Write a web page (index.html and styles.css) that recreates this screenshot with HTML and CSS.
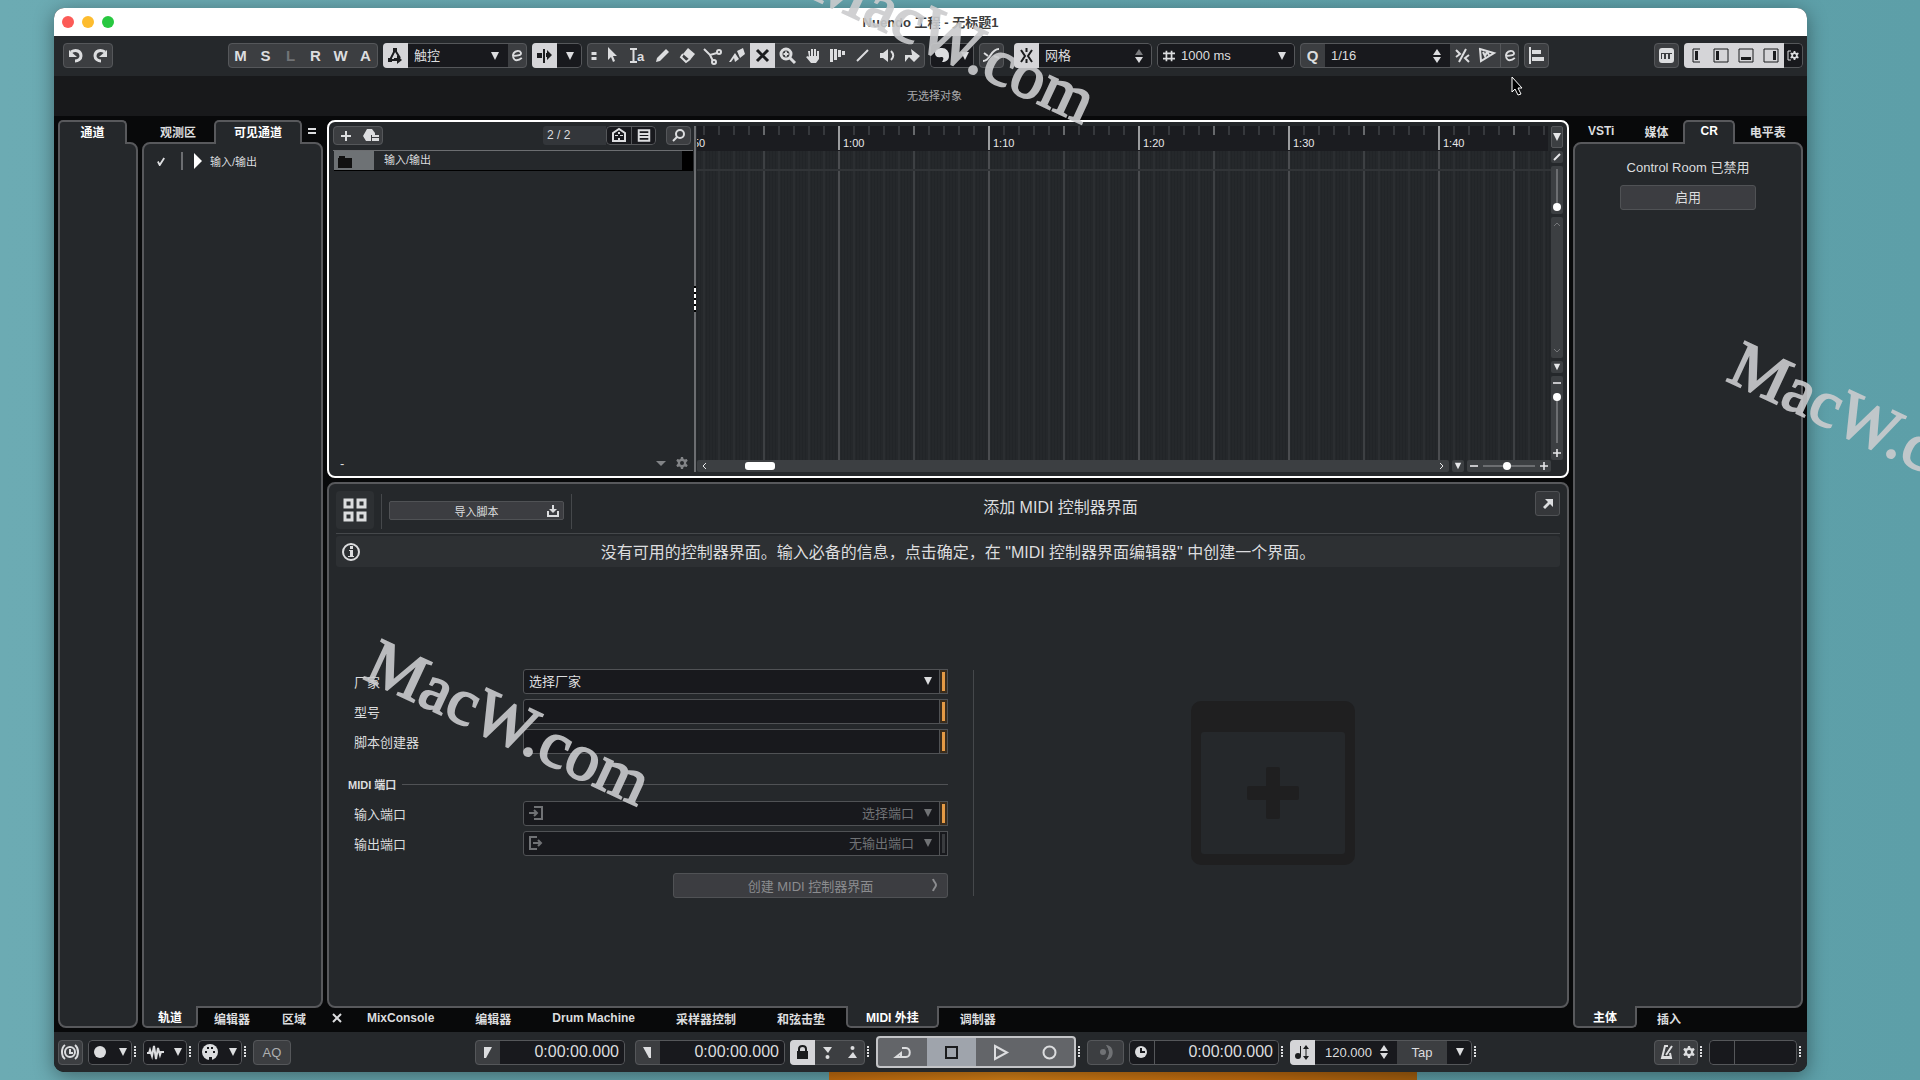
FILE: index.html
```html
<!DOCTYPE html>
<html lang="zh-CN">
<head>
    <meta charset="UTF-8">
    <meta name="viewport" content="width=device-width, initial-scale=1.0">
    <title>Nuendo 工程 - 无标题1</title>
    <link rel="stylesheet" href="styles.css">
</head>
<body>

<!-- Shared icons -->
<svg class="sprite" aria-hidden="true">
    <symbol id="caret" viewBox="0 0 10 10"><path d="M1 1h8L5 9z"/></symbol>
    <symbol id="spin" viewBox="0 0 10 16"><path d="M1 7l4-6 4 6z"/><path d="M1 9h8l-4 6z"/></symbol>
    <symbol id="dots" viewBox="0 0 4 12"><path d="M1 0h2v2H1zM1 3h2v2H1zM1 6h2v2H1zM1 9h2v2H1z"/></symbol>
    <symbol id="gear" viewBox="0 0 12 12"><path fill-rule="evenodd" d="M5 0h2l.5 2 1.200.6 2-.7 1 1.800-1.500 1.500v1.600l1.500 1.500-1 1.800-2-.7-1.200.6L7 12H5l-.5-2-1.200-.6-2 .7-1-1.800 1.500-1.500V5.200L.3 3.700l1-1.800 2 .7L4.500 2zM6 4a2 2 0 100 4 2 2 0 000-4z"/></symbol>
    <symbol id="plus" viewBox="0 0 10 10"><path d="M4 0h2v4h4v2H6v4H4V6H0V4h4z"/></symbol>
    <symbol id="letter-e" viewBox="0 0 20 25"><path class="thin" d="M5 13c6 0 9.500-1 8.500-3.500S8 7 6 10s0 7.500 3 7.500c2 0 4-1 5.500-2.500"/></symbol>
</svg>

<div class="window">
    <header class="titlebar">
        <span class="light red"></span>
        <span class="light yellow"></span>
        <span class="light green"></span>
        <h1>Nuendo 工程 - 无标题1</h1>
    </header>

    <!-- Toolbar -->
    <div class="toolbar">
        <div class="group">
            <button aria-label="撤消"><svg viewBox="0 0 25 25"><path class="line" d="M8 9c5-3 10-1 10 4 0 3-3 5-6 5"/><path d="M6 7v7h8z"/></svg></button>
            <button aria-label="重做"><svg viewBox="0 0 25 25"><path class="line" d="M17 9c-5-3-10-1-10 4 0 3 3 5 6 5"/><path d="M19 7v7h-8z"/></svg></button>
        </div>

        <div class="group states">
            <button>M</button>
            <button>S</button>
            <button class="dim">L</button>
            <button>R</button>
            <button>W</button>
            <button>A</button>
        </div>

        <div class="group">
            <button class="on" aria-label="自动化"><svg viewBox="0 0 25 25"><path class="thin" d="M7 17l5-10 5 8M7 17h4"/><path d="M10 5h4v4h-4zM5 15h4v4H5zM11 15h3v-3l5 5-5 4v-3h-3z"/></svg></button>
            <div class="field automation">
                <select aria-label="自动化模式"><option>触控</option></select>
                <svg class="caret"><use href="#caret"/></svg>
            </div>
            <button class="slim" aria-label="自动化面板"><svg class="narrow"><use href="#letter-e"/></svg></button>
        </div>

        <div class="group">
            <button class="on" aria-label="自动滚动"><svg viewBox="0 0 25 25"><path d="M5 10h5v5H5zM14 10h1V7l5 5-5 5v-3h-1zM11 6h2v14h-2z"/></svg></button>
            <button class="dark" aria-label="自动滚动设置"><svg class="caret"><use href="#caret"/></svg></button>
        </div>

        <div class="group tools">
            <button class="grip" aria-label="工具"><svg viewBox="0 0 12 25"><path d="M4 9h5v3H4zM4 14h5v3H4z"/></svg></button>
            <button aria-label="选择"><svg viewBox="0 0 25 25"><path d="M8 4l9 9h-4l2 5-2 1-2-5-3 3z"/></svg></button>
            <button aria-label="范围"><svg viewBox="0 0 25 25"><path class="thin" d="M5 6h7M5 19h7M8.500 6v13"/><text x="12" y="18">a</text></svg></button>
            <button aria-label="画笔"><svg viewBox="0 0 25 25"><path d="M6 19l1-4 9-9 3 3-9 9z"/></svg></button>
            <button aria-label="擦除"><svg viewBox="0 0 25 25"><path d="M13 5l7 6-5 6-7-6z"/><path class="thin" d="M8 11l-2 3 5 5 4-3"/></svg></button>
            <button aria-label="分割"><svg viewBox="0 0 25 25"><path class="thin" d="M4 6l6 6 7-2M10 12l3 6"/><circle class="thin" cx="19" cy="9" r="2"/><circle class="thin" cx="14" cy="19" r="2"/></svg></button>
            <button aria-label="粘合"><svg viewBox="0 0 25 25"><path d="M12 8l6-3 2 6-5 4zM10 10l4 6-4 3-1-4-3 4H4z"/></svg></button>
            <button class="on" aria-label="静音"><svg viewBox="0 0 25 25"><path class="line" d="M7 7l11 11M18 7L7 18"/></svg></button>
            <button aria-label="缩放"><svg viewBox="0 0 25 25"><circle class="line" cx="11" cy="11" r="5"/><path class="line" d="M15 15l5 5"/><path class="thin" d="M8.500 11h5M11 8.500v5"/></svg></button>
            <button aria-label="手形"><svg viewBox="0 0 25 25"><path d="M8 8h2v5h1V6h2v7h1V6h2v7h1V8h2v8l-3 4h-5l-5-6 2-1 1 1z"/></svg></button>
            <button aria-label="弯曲"><svg viewBox="0 0 25 25"><path d="M5 6h3v13H5zM9 6h3v11H9zM13 7h3v7h-3zM17 8h3v4h-3z"/></svg></button>
            <button aria-label="直线"><svg viewBox="0 0 25 25"><path class="thin" d="M7 18L18 7"/></svg></button>
            <button aria-label="试听"><svg viewBox="0 0 25 25"><path d="M5 10h3l5-4v13l-5-4H5z"/><path class="thin" d="M16 8c3 3 3 6 0 9"/></svg></button>
            <button aria-label="颜色"><svg viewBox="0 0 25 25"><path d="M11 6l9 7-6 6-5-5-4 5v-7h7z"/></svg></button>
        </div>

        <div class="group">
            <button class="dark" aria-label="颜色菜单"><svg viewBox="0 0 25 25"><path d="M12 5a7 7 0 017 8c0 4-3 6-7 6 2-3 2-5-1-5-4 1-6-1-6-4s3-5 7-5z"/></svg></button>
            <button class="dark slim" aria-label="选择颜色"><svg class="caret"><use href="#caret"/></svg></button>
        </div>
        <div class="group">
            <button aria-label="零交叉点"><svg viewBox="0 0 25 25"><path class="thin" d="M4 18c8 0 7-12 16-12M5 10l4 3M15 13l5 2"/></svg></button>
        </div>

        <div class="group snap">
            <button class="on" aria-label="吸附"><svg viewBox="0 0 25 25"><path class="thin" d="M7 7l4 6-4 6M18 7l-4 6 4 6M12.500 5v4M12.500 16v4"/></svg></button>
            <div class="field">
                <select aria-label="吸附类型"><option>网格</option></select>
                <svg class="spin" viewBox="0 0 10 16"><path class="faded" d="M1 7l4-6 4 6z"/><path d="M1 9h8l-4 6z"/></svg>
            </div>
        </div>

        <div class="group grid-type">
            <div class="field">
                <svg class="hash" viewBox="0 0 14 14"><path class="thin" d="M4 1v12M10 1v12M0 4h14M0 10h14"/></svg>
                <select aria-label="网格类型"><option>1000 ms</option></select>
                <svg class="caret"><use href="#caret"/></svg>
            </div>
        </div>

        <div class="group quantize">
            <button>Q</button>
            <div class="field">
                <select aria-label="量化预置"><option>1/16</option></select>
                <svg class="spin"><use href="#spin"/></svg>
            </div>
            <button aria-label="迭代量化"><svg viewBox="0 0 25 25"><path class="thin" d="M6 7l4 4-4 3M16 6L9 19M19 12l-4 3 4 4"/></svg></button>
            <button aria-label="柔性量化"><svg viewBox="0 0 25 25"><path class="thin" d="M5 6l14 4-13 8zM8 9l2 4 2-4 2 3"/></svg></button>
            <button class="slim edge" aria-label="量化面板"><svg class="narrow"><use href="#letter-e"/></svg></button>
        </div>
        <div class="group">
            <button aria-label="对齐"><svg viewBox="0 0 25 25"><path d="M5 4h2v17H5zM8 7h9v4H8zM8 14h12v4H8z"/></svg></button>
        </div>

        <div class="group push">
            <button aria-label="屏幕键盘"><svg viewBox="0 0 25 25"><rect class="thin" x="6" y="6" width="13" height="13" rx="2"/><path d="M6 7h13v3H6zM8 11h2v5H8zM12 11h2v5h-2zM16 11h2v5h-2z"/><path d="M7 16h11v2H7z"/></svg></button>
        </div>
        <div class="group zones">
            <button class="on" aria-label="通道区"><svg viewBox="0 0 25 25"><path class="hair" d="M16 6H9v13h7"/><path d="M11 8h3v9h-3z"/></svg></button>
            <button class="on" aria-label="左侧区"><svg viewBox="0 0 25 25"><path class="hair" d="M5 6h14v13H5z"/><path d="M7 8h3v9H7z"/></svg></button>
            <button class="on" aria-label="下部区"><svg viewBox="0 0 25 25"><path class="hair" d="M5 6h14v13H5z"/><path d="M7 14h10v3H7z"/></svg></button>
            <button class="on" aria-label="右侧区"><svg viewBox="0 0 25 25"><path class="hair" d="M5 6h14v13H5z"/><path d="M14 8h3v9h-3z"/></svg></button>
            <button class="dark slim" aria-label="设置窗口布局"><svg viewBox="0 0 19 25"><path class="hair" d="M7 8H4v9h3"/><svg x="6" y="8" width="9" height="9"><use href="#gear"/></svg></svg></button>
        </div>
    </div>

    <div class="infoline">无选择对象</div>

    <main>
        <!-- Channel column -->
        <section class="zone">
            <div class="tabs top">
                <button class="tab active channel-tab">通道</button>
            </div>
            <div class="panel after-tab"></div>
        </section>

        <!-- Visibility column -->
        <section class="zone">
            <div class="tabs top visibility">
                <button class="tab">观测区</button>
                <button class="tab active">可见通道</button>
                <button class="equals" aria-label="选项"><svg viewBox="0 0 10 10"><path d="M1 2h8v2H1zM1 6h8v2H1z"/></svg></button>
            </div>
            <div class="panel square-bottom">
                <div class="channel-row">
                    <svg class="check" viewBox="0 0 10 10"><path class="thin" d="M1 5l2 4 5-8"/></svg>
                    <span class="bar"></span>
                    <svg class="play" viewBox="0 0 8 16"><path d="M0 0l8 8-8 8z"/></svg>
                    <span>输入/输出</span>
                </div>
            </div>
            <div class="tabs bottom tight">
                <button class="tab active">轨道</button>
                <button class="tab">编辑器</button>
                <button class="tab">区域</button>
            </div>
        </section>

        <div class="center">
            <!-- Project window -->
            <section class="project">
                <div class="tracklist">
                    <div class="track-tools">
                        <div class="group">
                            <button aria-label="添加轨道"><svg class="add"><use href="#plus"/></svg></button>
                            <button aria-label="使用轨道预置"><svg viewBox="0 0 25 19"><path d="M9 3h5l3 4v2h-4v6H8l-3-5z"/><path d="M14 9h7v2h-7zM14 12h7v3h-7z"/></svg></button>
                        </div>
                        <span class="count">2 / 2</span>
                        <div class="group">
                            <button class="dark" aria-label="轨道可见性"><svg viewBox="0 0 25 19"><path class="thin" d="M7 7l6-4 6 4v8H7z"/><path d="M9 9h3v1H9zM14 9h3v1h-3zM12 12h2v2h-2zM12 6h2v2h-2z"/></svg></button>
                            <button class="dark edge" aria-label="分割轨道列表"><svg viewBox="0 0 25 19"><path class="thin" d="M7 4h11v11H7zM7 8h11M7 11h11"/></svg></button>
                        </div>
                        <div class="group find">
                            <button aria-label="查找轨道"><svg viewBox="0 0 25 19"><circle class="thin" cx="14" cy="8" r="4"/><path class="thin" d="M11 11l-4 4"/></svg></button>
                        </div>
                    </div>
                    <div class="track">
                        <span class="folder"><svg viewBox="0 0 14 12"><path d="M0 2h1V0h6v2h7v10H0z"/></svg></span>
                        <span class="name">输入/输出</span>
                        <span class="meter"></span>
                    </div>
                    <div class="track-footer">
                        <span>-</span>
                        <svg class="drop" viewBox="0 0 10 5"><path d="M0 0h10L5 5z"/></svg>
                        <svg class="cog"><use href="#gear"/></svg>
                    </div>
                </div>

                <div class="splitter"><svg viewBox="0 0 2 24"><path d="M0 1h2v4H0zM0 7h2v4H0zM0 13h2v4H0zM0 19h2v4H0z"/></svg></div>

                <div class="timeline">
                    <div class="ruler">
                        <span class="cut">50</span>
                        <span>1:00</span>
                        <span>1:10</span>
                        <span>1:20</span>
                        <span>1:30</span>
                        <span>1:40</span>
                    </div>
                    <div class="events"></div>
                </div>

                <div class="v-strip">
                    <button class="ruler-menu" aria-label="标尺"><svg class="caret"><use href="#caret"/></svg></button>
                    <button aria-label="编辑"><svg viewBox="0 0 12 12"><path class="thin" d="M3 9l6-6"/></svg></button>
                    <div class="cell wave"><input type="range" aria-label="波形缩放" value="0"></div>
                    <div class="cell scroll"><svg viewBox="0 0 8 8"><path class="hair" d="M1 6l3-3 3 3"/></svg><svg viewBox="0 0 8 8"><path class="hair" d="M1 2l3 3 3-3"/></svg></div>
                    <button aria-label="缩放预置"><svg class="small"><use href="#caret"/></svg></button>
                    <div class="cell zoom">
                        <svg viewBox="0 0 10 10"><path d="M0 4h10v2H0z"/></svg>
                        <input type="range" aria-label="垂直缩放" value="100">
                        <svg><use href="#plus"/></svg>
                    </div>
                </div>

                <div class="h-strip">
                    <div class="cell scroll">
                        <svg viewBox="0 0 8 8"><path class="hair" d="M5 1L2 4l3 3"/></svg>
                        <span class="thumb"></span>
                        <svg viewBox="0 0 8 8"><path class="hair" d="M3 1l3 3-3 3"/></svg>
                    </div>
                    <button aria-label="缩放预置"><svg class="small"><use href="#caret"/></svg></button>
                    <div class="cell zoom">
                        <svg viewBox="0 0 10 10"><path d="M0 4h10v2H0z"/></svg>
                        <input type="range" aria-label="水平缩放" value="45">
                        <svg><use href="#plus"/></svg>
                    </div>
                </div>
            </section>

            <!-- Lower zone -->
            <section class="zone">
                <div class="panel lower">
                    <div class="lower-head">
                        <button class="surfaces" aria-label="界面"><svg viewBox="0 0 24 24"><path class="line" d="M2 2h7v7H2zM15 2h7v7h-7zM2 15h7v7H2zM15 15h7v7h-7z"/></svg></button>
                        <span class="rule"></span>
                        <button class="import"><span>导入脚本</span><svg viewBox="0 0 12 12"><path d="M5 0h2v4h3L6 8 2 4h3z"/><path class="thin" d="M1 6v5h10V6"/></svg></button>
                        <span class="rule"></span>
                        <h2>添加 MIDI 控制器界面</h2>
                        <button class="external" aria-label="在窗口中打开"><svg viewBox="0 0 12 12"><path d="M3 1h8v8L8 6l-5 5-2-2 5-5z"/></svg></button>
                    </div>
                    <div class="notice">
                        <svg viewBox="0 0 20 20"><circle class="thin" cx="10" cy="10" r="8"/><path d="M9 4h3v3H9zM8 8h4v6h1v1H7v-1h2v-5H8z"/></svg>
                        <p>没有可用的控制器界面。输入必备的信息，点击确定，在 "MIDI 控制器界面编辑器" 中创建一个界面。</p>
                    </div>

                    <div class="setup">
                        <form>
                            <div class="row">
                                <label for="vendor">厂家</label>
                                <div class="box required">
                                    <select id="vendor"><option>选择厂家</option></select>
                                    <svg class="caret"><use href="#caret"/></svg>
                                    <i></i>
                                </div>
                            </div>
                            <div class="row">
                                <label for="model">型号</label>
                                <div class="box required"><input type="text" id="model"><i></i></div>
                            </div>
                            <div class="row">
                                <label for="creator">脚本创建器</label>
                                <div class="box required"><input type="text" id="creator"><i></i></div>
                            </div>
                            <h3>MIDI 端口</h3>
                            <div class="row">
                                <label for="port-in">输入端口</label>
                                <div class="box required port">
                                    <svg class="port-icon" viewBox="0 0 14 16"><path class="thin" d="M5 2h8v12H5M0 8h8M5 5l3 3-3 3"/></svg>
                                    <select id="port-in" disabled><option>选择端口</option></select>
                                    <svg class="caret"><use href="#caret"/></svg>
                                    <i></i>
                                </div>
                            </div>
                            <div class="row">
                                <label for="port-out">输出端口</label>
                                <div class="box port">
                                    <svg class="port-icon" viewBox="0 0 14 16"><path class="thin" d="M8 2H1v12h7M4 8h8M9 5l3 3-3 3"/></svg>
                                    <select id="port-out" disabled><option>无输出端口</option></select>
                                    <svg class="caret"><use href="#caret"/></svg>
                                    <i></i>
                                </div>
                            </div>
                            <button type="button" class="create" disabled><span>创建 MIDI 控制器界面</span><svg viewBox="0 0 8 16"><path class="thin" d="M2 2c1 3 3 4 3 6s-2 3-3 6"/></svg></button>
                        </form>
                        <div class="preview">
                            <svg viewBox="0 0 164 164"><path fill-rule="evenodd" d="M10 0h144a10 10 0 0110 10v144a10 10 0 01-10 10H10a10 10 0 01-10-10V10A10 10 0 0110 0zM13 31a3 3 0 00-3 3v116a3 3 0 003 3h138a3 3 0 003-3V34a3 3 0 00-3-3z"/><rect x="75" y="66" width="14" height="52" rx="2"/><rect x="56" y="85" width="52" height="14" rx="2"/></svg>
                        </div>
                    </div>
                </div>
                <div class="tabs bottom spaced">
                    <button class="close" aria-label="关闭"><svg viewBox="0 0 10 10"><path class="thin" d="M1 1l8 8M9 1L1 9"/></svg></button>
                    <button class="tab">MixConsole</button>
                    <button class="tab">编辑器</button>
                    <button class="tab">Drum Machine</button>
                    <button class="tab">采样器控制</button>
                    <button class="tab">和弦击垫</button>
                    <button class="tab active">MIDI 外挂</button>
                    <button class="tab">调制器</button>
                </div>
            </section>
        </div>

        <!-- Right zone -->
        <section class="zone">
            <div class="tabs top right">
                <button class="tab">VSTi</button>
                <button class="tab">媒体</button>
                <button class="tab active">CR</button>
                <button class="tab">电平表</button>
            </div>
            <div class="panel control-room square-bottom">
                <p>Control Room 已禁用</p>
                <button>启用</button>
            </div>
            <div class="tabs bottom">
                <button class="tab active">主体</button>
                <button class="tab">插入</button>
            </div>
        </section>
    </main>

    <!-- Transport bar -->
    <footer>
        <div class="group">
            <button aria-label="延迟补偿"><svg viewBox="0 0 25 25"><circle class="thin" cx="12" cy="12" r="5"/><path class="thin" d="M7 5c-4 3-4 11 0 14M17 5c4 3 4 11 0 14M12 9v4h3"/></svg></button>
        </div>
        <div class="group">
            <button class="dark" aria-label="录音模式"><svg viewBox="0 0 25 25"><circle cx="12" cy="12" r="6"/></svg></button>
            <button class="dark slim" aria-label="录音模式菜单"><svg class="caret"><use href="#caret"/></svg></button>
        </div>
        <svg class="dots"><use href="#dots"/></svg>
        <div class="group">
            <button class="dark" aria-label="音频录音"><svg viewBox="0 0 25 25"><path class="thin" d="M4 13h2l1-3 2 6 2-10 2 13 2-11 2 7 1-3h3"/></svg></button>
            <button class="dark slim" aria-label="音频录音菜单"><svg class="caret"><use href="#caret"/></svg></button>
        </div>
        <svg class="dots"><use href="#dots"/></svg>
        <div class="group">
            <button class="dark" aria-label="MIDI 录音"><svg viewBox="0 0 25 25"><circle cx="12" cy="12" r="8"/><path class="holes" d="M7 11h2v2H7zM9 7h2v2H9zM13 7h2v2h-2zM15 11h2v2h-2zM11 17h3v3h-3z"/></svg></button>
            <button class="dark slim" aria-label="MIDI 录音菜单"><svg class="caret"><use href="#caret"/></svg></button>
        </div>
        <svg class="dots"><use href="#dots"/></svg>
        <div class="group"><button class="aq">AQ</button></div>

        <div class="group time left-locator">
            <button aria-label="左定位"><svg viewBox="0 0 25 25"><path d="M9 7h8L11 18H9z"/></svg></button>
            <input type="text" aria-label="左定位时间" value="0:00:00.000">
        </div>
        <div class="group time right-locator">
            <button aria-label="右定位"><svg viewBox="0 0 25 25"><path d="M8 7h8v11h-2z"/></svg></button>
            <input type="text" aria-label="右定位时间" value="0:00:00.000">
        </div>
        <div class="group">
            <button class="on" aria-label="锁定"><svg viewBox="0 0 25 25"><path d="M7 11h11v8H7z"/><path class="thin" d="M9 12V9c0-4 7-4 7 0v3"/></svg></button>
            <button aria-label="切入"><svg viewBox="0 0 25 25"><path d="M8 7h9l-4 6z"/><circle cx="12.500" cy="17" r="2"/></svg></button>
            <button aria-label="切出"><svg viewBox="0 0 25 25"><path d="M8 18h9l-4-6z"/><circle cx="12.500" cy="8" r="2"/></svg></button>
        </div>
        <svg class="dots"><use href="#dots"/></svg>
        <div class="transport">
            <button aria-label="循环"><svg viewBox="0 0 25 25"><path class="thin" d="M12 8h4c5 0 5 9 0 9H6l5-4v4"/></svg></button>
            <button class="stop" aria-label="停止"><svg viewBox="0 0 25 25"><path class="thin" d="M7 7h11v11H7z"/></svg></button>
            <button aria-label="播放"><svg viewBox="0 0 25 25"><path class="thin" d="M7 6l12 6.500L7 19z"/></svg></button>
            <button aria-label="录音"><svg viewBox="0 0 25 25"><circle class="thin" cx="12.500" cy="12.500" r="6"/></svg></button>
        </div>
        <svg class="dots"><use href="#dots"/></svg>
        <div class="group"><button class="sleep" aria-label="预览"><svg viewBox="0 0 25 25"><path d="M13 5a8 8 0 010 15c4-5 4-10 0-15z"/><path d="M13 5c9 0 9 15 0 15 4-5 4-10 0-15z"/><circle cx="10" cy="12" r="3"/></svg></button></div>
        <div class="group time">
            <button class="dark" aria-label="时间格式"><svg viewBox="0 0 25 25"><circle cx="12" cy="12" r="6"/><path class="hands" d="M12 8v4h4"/></svg></button>
            <input class="edge" type="text" aria-label="主时间" value="0:00:00.000">
        </div>
        <svg class="dots"><use href="#dots"/></svg>
        <div class="group tempo">
            <button class="on" aria-label="速度轨"><svg viewBox="0 0 25 25"><circle cx="8" cy="16" r="3"/><path class="hair" d="M10.500 16V6M16 8v10"/><path d="M13 9l3-4 3 4zM13 16l3 4 3-4z"/></svg></button>
            <input type="text" aria-label="速度" value="120.000">
            <span class="spinbox"><svg class="spin"><use href="#spin"/></svg></span>
            <button class="tap">Tap</button>
            <button class="dark" aria-label="速度菜单"><svg class="caret"><use href="#caret"/></svg></button>
        </div>
        <svg class="dots"><use href="#dots"/></svg>

        <div class="group push">
            <button aria-label="节拍器"><svg viewBox="0 0 25 25"><path class="thin" d="M14 6h-3L8 18h9l-1-5M12 15l6-9M8 17h9"/></svg></button>
            <button class="slim edge" aria-label="节拍器设置"><svg class="cog"><use href="#gear"/></svg></button>
        </div>
        <svg class="dots"><use href="#dots"/></svg>
        <div class="group output"><span></span><span class="edge"></span></div>
        <svg class="dots"><use href="#dots"/></svg>
    </footer>
</div>

<!-- Overlays -->
<svg class="pointer" viewBox="0 0 14 20"><path d="M2 1l10 11H8l3 6-3 1-3-6-3 3z"/></svg>
<div class="watermarks" aria-hidden="true">
    <span class="mark-top">MacW.com</span>
    <span class="mark-form">MacW.com</span>
    <span class="mark-side">MacW.com</span>
</div>

</body>
</html>
```
FILE: styles.css
```css
/* Global Styles */
* {
    box-sizing: border-box;
}
body {
    margin: 0;
    height: 100vh;
    padding: 8px 113px 8px 54px;
    overflow: hidden;
    font-family: "Liberation Sans", "Noto Sans CJK SC", sans-serif;
    font-size: 13px;
    color: #dcdddf;
    background:
        linear-gradient(to right, #c9700f, #d98318 30%, #c9700f 70%, #a9620f) no-repeat 829px 100% / 588px 9px,
        linear-gradient(to right, #6cabb3, #64a6af 50%, #5d9fa8);
}
h1, h2, h3, p {
    margin: 0;
    font-weight: normal;
}
button, input, select {
    margin: 0;
    padding: 0;
    border: none;
    border-radius: 0;
    background: none;
    color: inherit;
    font: inherit;
}
button {
    display: flex;
    align-items: center;
    justify-content: center;
    flex-shrink: 0;
}
select {
    appearance: none;
    flex: 1;
    min-width: 0;
    opacity: 1;
}
svg {
    display: block;
    flex-shrink: 0;
    fill: currentColor;
}
.line, .thin, .hair {
    fill: none;
    stroke: currentColor;
    stroke-width: 3;
}
.thin {
    stroke-width: 2;
}
.hair {
    stroke-width: 1;
}
.faded {
    opacity: 0.5;
}
.sprite {
    position: absolute;
    width: 0;
    height: 0;
}
.caret, .add {
    width: 10px;
    height: 10px;
}
.small {
    width: 8px;
    height: 8px;
}
.cog {
    width: 12px;
    height: 12px;
}
.spin {
    width: 10px;
    height: 16px;
}
.dots {
    width: 4px;
    height: 12px;
    margin: 0 1px 0 -4px;
}
.push {
    margin-left: auto;
}

/* Window */
.window {
    display: flex;
    flex-direction: column;
    height: 100%;
    border-radius: 10px;
    overflow: hidden;
    background: #08090a;
    box-shadow: 0 4px 20px rgba(0, 0, 0, 0.4);
}
.titlebar {
    display: flex;
    align-items: center;
    gap: 8px;
    height: 28px;
    padding: 0 68px 0 8px;
    background: #fff;
}
.titlebar h1 {
    flex: 1;
    padding-bottom: 2px;
    text-align: center;
    font-size: 13px;
    font-weight: bold;
    color: #3c3c3c;
}
.light {
    width: 12px;
    height: 12px;
    border-radius: 50%;
}
.red {
    background: #fc5b57;
}
.yellow {
    background: #fdbc2e;
}
.green {
    background: #28c840;
}

/* Toolbar */
.toolbar {
    display: flex;
    gap: 5px;
    height: 40px;
    padding: 7px 4px 0 9px;
    background: #25282b;
}
.group {
    position: relative;
    display: flex;
    flex-shrink: 0;
    height: 25px;
    border-radius: 4px;
    overflow: hidden;
    background: #3c3e41;
}
.group::after {
    content: "";
    position: absolute;
    inset: 0;
    border: 1px solid #55575a;
    border-radius: 4px;
    pointer-events: none;
}
.group button {
    width: 25px;
    height: 100%;
}
.group button > svg[viewBox] {
    width: 100%;
    height: 100%;
}
.group .slim {
    width: 19px;
}
.group .on {
    position: relative;
    z-index: 1;
    background: #d5d5d8;
    color: #1b1c1e;
}
.dark {
    background: #18191d;
}
.edge {
    border-left: 1px solid #55575a;
}
.narrow {
    width: 19px;
    height: 25px;
}
.states {
    margin: 0 0 0 110px;
}
.states button, .quantize > button {
    font-size: 15px;
    font-weight: bold;
}
.states .dim {
    color: #717376;
}
.field {
    display: flex;
    align-items: center;
    flex: 1;
    padding: 0 8px 0 6px;
    background: #18191d;
}
.automation {
    width: 100px;
}
.group .grip {
    width: 13px;
}
.tools text {
    font-size: 13px;
    font-weight: bold;
}
.snap {
    width: 138px;
    margin-left: 5px;
}
.grid-type {
    width: 138px;
}
.hash {
    width: 12px;
    height: 12px;
    margin-right: 6px;
}
.quantize {
    width: 219px;
}
.infoline {
    display: flex;
    align-items: center;
    justify-content: center;
    height: 40px;
    padding: 0 0 2px 8px;
    font-size: 11px;
    color: #a9aaac;
    background: #18191b;
}

/* Zones */
main {
    display: grid;
    grid-template-columns: 80px 181px minmax(0, 1fr) 230px;
    gap: 4px;
    flex: 1;
    min-height: 0;
    padding: 4px;
}
.zone {
    display: flex;
    flex-direction: column;
    min-height: 0;
}
.panel {
    flex: 1;
    border: 2px solid #58595c;
    border-radius: 8px;
    background: #25282b;
}
.after-tab {
    border-top-left-radius: 0;
}
.square-bottom {
    border-bottom-left-radius: 0;
}
.tabs {
    display: flex;
    height: 22px;
    font-size: 12px;
    font-weight: bold;
}
.tabs.bottom {
    height: 20px;
}
.spaced {
    gap: 1px;
}
.tab {
    padding: 0 20px;
    white-space: nowrap;
}
.tight .tab {
    padding: 0 16px;
}
.visibility .tab {
    padding: 0 18px;
}
.right .tab {
    padding: 0 15px;
}
.tab.active {
    position: relative;
    border: 2px solid #58595c;
    padding: 0 18px;
    background: #25282b;
    color: #fff;
}
.tight .tab.active {
    padding: 0 14px;
}
.right .tab.active {
    padding: 0 15px;
}
.tabs.top .tab.active {
    height: 24px;
    padding-bottom: 4px;
    border-bottom: none;
    border-radius: 5px 5px 0 0;
}
.bottom .active {
    height: 22px;
    margin-top: -2px;
    border-top: none;
    border-radius: 0 0 5px 5px;
}
.tab.channel-tab {
    width: 69px;
}
.equals {
    width: 20px;
}
.equals svg, .close svg {
    width: 10px;
    height: 10px;
}
.close {
    width: 19px;
}
.channel-row {
    display: flex;
    align-items: center;
    height: 34px;
    padding-left: 13px;
    font-size: 11px;
}
.check {
    width: 9px;
    height: 9px;
    margin-right: 15px;
}
.bar {
    width: 2px;
    height: 18px;
    margin-right: 11px;
    background: #6c6e71;
}
.play {
    width: 8px;
    height: 16px;
    margin-right: 8px;
    color: #fff;
}

/* Project window */
.center {
    display: grid;
    grid-template-rows: 358px minmax(0, 1fr);
    gap: 4px;
}
.project {
    display: grid;
    grid-template-columns: 360px 2px minmax(0, 1fr) 12px;
    grid-template-rows: minmax(0, 1fr) 12px;
    padding: 4px;
    border: 2px solid #fff;
    border-radius: 8px;
    background: #25282b;
}
.tracklist, .splitter {
    grid-row: 1 / 3;
}
.tracklist {
    display: flex;
    flex-direction: column;
}
.track-tools {
    display: flex;
    height: 25px;
    border-bottom: 1px solid #6c6e71;
}
.track-tools .group {
    height: 19px;
}
.count {
    width: 63px;
    height: 19px;
    margin-left: auto;
    padding-left: 4px;
    line-height: 19px;
    font-size: 12px;
    border-radius: 3px 0 0 3px;
    background: #33363a;
}
.find {
    margin: 0 2px 0 10px;
}
.track {
    display: flex;
    height: 20px;
    margin-left: 1px;
    border-bottom: 1px solid #000;
    line-height: 19px;
    font-size: 11px;
}
.folder {
    display: flex;
    align-items: flex-end;
    width: 40px;
    margin-right: 10px;
    padding: 0 0 2px 4px;
    background: #6e7275;
    color: #111;
}
.folder svg {
    width: 14px;
    height: 12px;
}
.meter {
    width: 11px;
    margin-left: auto;
    background: #000;
}
.track-footer {
    display: flex;
    align-items: center;
    gap: 10px;
    height: 18px;
    margin-top: auto;
    padding: 0 5px 0 7px;
}
.track-footer svg {
    color: #828487;
}
.drop {
    width: 10px;
    height: 5px;
    margin-left: auto;
}
.splitter {
    display: flex;
    align-items: center;
    margin-left: 1px;
    margin-right: -1px;
    background: #6c6e71;
}
.splitter svg {
    width: 2px;
    height: 26px;
    background: #000;
    color: #fff;
}
.timeline {
    display: flex;
    flex-direction: column;
    margin-left: 2px;
}
/* one major line every 150px, halves at 75px, seconds at 15px */
.ruler {
    display: flex;
    height: 25px;
    margin-right: 3px;
    overflow: hidden;
    font-size: 11px;
    line-height: 14px;
    color: #e6e7e9;
    background-color: #1b1c20;
    background-image:
        linear-gradient(to right, #9c9d9f 2px, transparent 2px),
        linear-gradient(to right, #67696c 2px, transparent 2px),
        linear-gradient(to right, #36383c 2px, transparent 2px);
    background-repeat: repeat-x;
    background-position: -9px 0, -84px 0, -9px 0;
    background-size: 150px 24px, 150px 9px, 15px 9px;
}
.ruler span {
    flex: 0 0 150px;
    padding: 10px 0 0 4px;
}
.ruler .cut {
    flex-basis: 142px;
    padding-left: 0;
    text-indent: -4px;
}
.events {
    flex: 1;
    background-image:
        linear-gradient(#313437, #313437),
        linear-gradient(to right, #4b4d50 2px, transparent 2px),
        linear-gradient(to right, #3d4043 2px, transparent 2px),
        linear-gradient(to right, #2b2e31 2px, transparent 2px),
        linear-gradient(to right, #222528 1px, transparent 1px);
    background-repeat: no-repeat, repeat, repeat, repeat, repeat;
    background-position: 0 18px, -9px 0, -84px 0, -9px 0, 0 0;
    background-size: 100% 2px, 150px 100%, 150px 100%, 15px 100%, 3px 100%;
}
.v-strip {
    display: flex;
    flex-direction: column;
    gap: 3px;
}
.v-strip button, .h-strip button, .cell {
    flex: 0 0 12px;
    min-width: 0;
    min-height: 0;
    border-radius: 2px;
    background: #3c3f42;
    color: #e6e7e9;
}
.v-strip .ruler-menu {
    flex-basis: 22px;
    border: 1px solid #55575a;
}
.cell {
    display: flex;
    align-items: center;
    justify-content: space-between;
}
.cell svg {
    width: 8px;
    height: 8px;
}
.v-strip .cell {
    flex-direction: column;
    padding: 3px 0;
}
.v-strip .wave {
    flex-basis: 48px;
}
.v-strip .scroll {
    flex: 1;
    color: #75777a;
}
.v-strip .zoom {
    flex-basis: 84px;
    gap: 6px;
}
input[type="range"] {
    appearance: none;
    flex: 1;
    min-width: 0;
    min-height: 0;
    height: 8px;
}
.v-strip input[type="range"] {
    writing-mode: vertical-lr;
    direction: rtl;
    width: 8px;
    height: auto;
}
input[type="range"]::-webkit-slider-runnable-track {
    height: 2px;
    background: #6c6e71;
}
.v-strip input[type="range"]::-webkit-slider-runnable-track {
    width: 2px;
    height: 100%;
}
input[type="range"]::-webkit-slider-thumb {
    appearance: none;
    width: 8px;
    height: 8px;
    margin-top: -3px;
    border-radius: 50%;
    background: #fff;
}
.v-strip input[type="range"]::-webkit-slider-thumb {
    margin: 0 0 0 -3px;
}
.h-strip {
    grid-column: 3 / 4;
    display: flex;
    gap: 3px;
    margin-left: 2px;
}
.h-strip .scroll {
    flex: 1;
    padding: 0 4px;
}
.thumb {
    width: 30px;
    height: 8px;
    margin: 0 auto 0 36px;
    border-radius: 3px;
    background: #fff;
}
.h-strip .zoom {
    flex-basis: 84px;
    padding: 0 3px;
    gap: 5px;
}

/* Lower zone */
.lower {
    display: flex;
    flex-direction: column;
    min-height: 0;
    padding: 7px;
}
.lower-head {
    display: flex;
    gap: 7px;
    padding-bottom: 4px;
    border-bottom: 1px solid #45484b;
}
.surfaces {
    width: 38px;
    height: 38px;
    border-radius: 4px;
    background: #2d3033;
}
.surfaces svg {
    width: 24px;
    height: 24px;
}
.rule {
    width: 1px;
    margin-top: 3px;
    background: #45484b;
}
.import {
    width: 175px;
    height: 19px;
    margin-top: 10px;
    padding: 0 4px 0 16px;
    border: 1px solid #505255;
    border-radius: 2px;
    background: #3c3d41;
    font-size: 11px;
}
.import span {
    flex: 1;
    text-align: center;
}
.import svg {
    width: 12px;
    height: 12px;
}
.lower-head h2 {
    flex: 1;
    padding: 3px 0 0 14px;
    text-align: center;
    font-size: 16px;
}
.external {
    width: 25px;
    height: 25px;
    border: 1px solid #505255;
    border-radius: 3px;
    background: #35373a;
}
.external svg {
    width: 12px;
    height: 12px;
}
.notice {
    display: flex;
    align-items: center;
    height: 31px;
    margin-top: 2px;
    padding: 0 5px;
    border-radius: 3px;
    background: #2d3033;
    font-size: 16px;
}
.notice svg {
    width: 20px;
    height: 20px;
}
.notice p {
    flex: 1;
    padding-bottom: 2px;
    text-align: center;
}
.setup {
    display: flex;
    align-items: center;
    flex: 1;
    min-height: 0;
    padding-left: 12px;
}
form {
    display: flex;
    flex-direction: column;
    gap: 5px;
    width: 600px;
}
.row {
    display: grid;
    grid-template-columns: 175px minmax(0, 1fr);
    align-items: center;
}
.row label {
    padding-left: 6px;
}
.box {
    display: flex;
    align-items: center;
    height: 25px;
    border: 1px solid #505255;
    border-radius: 3px;
    background: #18191d;
}
.box input {
    flex: 1;
    min-width: 0;
}
.box select {
    padding-left: 5px;
}
.box .caret {
    margin: 0 7px;
}
.box i {
    width: 7px;
    height: 23px;
    border: 2px solid #18191d;
    background: #3a3c3f;
    outline: 1px solid #505255;
}
.box.required i {
    border-color: #3a2c1c;
    background: #e59a45;
}
.port {
    color: #707275;
}
.box.port select {
    text-align: right;
    text-align-last: right;
    padding: 0 2px;
}
.port-icon {
    width: 14px;
    height: 16px;
    margin-left: 5px;
}
form h3 {
    display: flex;
    align-items: center;
    gap: 6px;
    height: 17px;
    margin: 17px 0 3px;
    font-size: 11px;
    font-weight: bold;
}
form h3::after {
    content: "";
    flex: 1;
    height: 1px;
    background: #505255;
}
.create {
    width: 275px;
    height: 25px;
    margin: 12px 0 0 auto;
    padding: 0 8px 0 16px;
    border: 1px solid #505255;
    border-radius: 3px;
    background: #3c3d41;
    color: #8b8c8f;
}
.create span {
    flex: 1;
    text-align: center;
}
.create svg {
    width: 8px;
    height: 16px;
}
.preview {
    display: flex;
    align-items: center;
    justify-content: center;
    flex: 1;
    height: 226px;
    margin-left: 25px;
    padding-left: 12px;
    border-left: 1px solid #45484b;
}
.preview svg {
    width: 164px;
    height: 164px;
    color: #1f1f20;
}

/* Control Room */
.control-room {
    display: flex;
    flex-direction: column;
    align-items: center;
    gap: 9px;
    padding-top: 16px;
}
.control-room button {
    width: 136px;
    height: 25px;
    padding-bottom: 2px;
    border: 1px solid #505255;
    border-radius: 3px;
    background: #3c3d41;
}
.control-room p {
    line-height: 16px;
}

/* Transport bar */
footer {
    display: flex;
    align-items: center;
    gap: 5px;
    height: 40px;
    padding: 0 4px;
    background: #25282b;
}
.group .aq {
    width: 38px;
    color: #aeb0b2;
}
.time {
    width: 150px;
    font-size: 16px;
}
.time input {
    flex: 1;
    min-width: 0;
    padding-right: 6px;
    text-align: right;
    background: #18191d;
}
.left-locator {
    margin-left: 179px;
}
.right-locator {
    margin-left: 5px;
}
.transport {
    display: flex;
    flex-shrink: 0;
    width: 200px;
    height: 32px;
    border: 2px solid #c4c5c8;
    border-radius: 4px;
    background: #636569;
}
.transport button {
    flex: 1;
}
.transport svg {
    width: 25px;
    height: 25px;
}
.transport .stop {
    background: #9fa4ac;
    color: #1b1c1e;
}
.group .sleep {
    width: 37px;
    color: #707275;
}
.holes {
    fill: #18191d;
}
.hands {
    fill: none;
    stroke: #18191d;
    stroke-width: 2;
}
.tempo input {
    width: 64px;
    padding-left: 10px;
    background: #18191d;
}
.spinbox {
    display: flex;
    align-items: center;
    width: 18px;
    background: #18191d;
}
.group .tap {
    width: 50px;
}
.output span {
    width: 25px;
    background: #18191d;
}
.output .edge {
    width: 63px;
}

/* Overlays */
.pointer {
    position: absolute;
    left: 1510px;
    top: 76px;
    width: 14px;
    height: 20px;
    fill: #000;
    stroke: #fff;
}
.watermarks {
    position: absolute;
    inset: 0;
    overflow: hidden;
    pointer-events: none;
}
.watermarks span {
    position: absolute;
    font-family: "Liberation Serif", serif;
    font-size: 66px;
    line-height: 64px;
    color: #cbccce;
    -webkit-text-stroke: 2px #cbccce;
    opacity: 0.9;
    transform: rotate(25deg);
    transform-origin: 0 54px;
}
.mark-top {
    left: 807px;
    top: -58px;
}
.mark-form {
    left: 362px;
    top: 624px;
}
.mark-side {
    left: 1725px;
    top: 326px;
}
```
